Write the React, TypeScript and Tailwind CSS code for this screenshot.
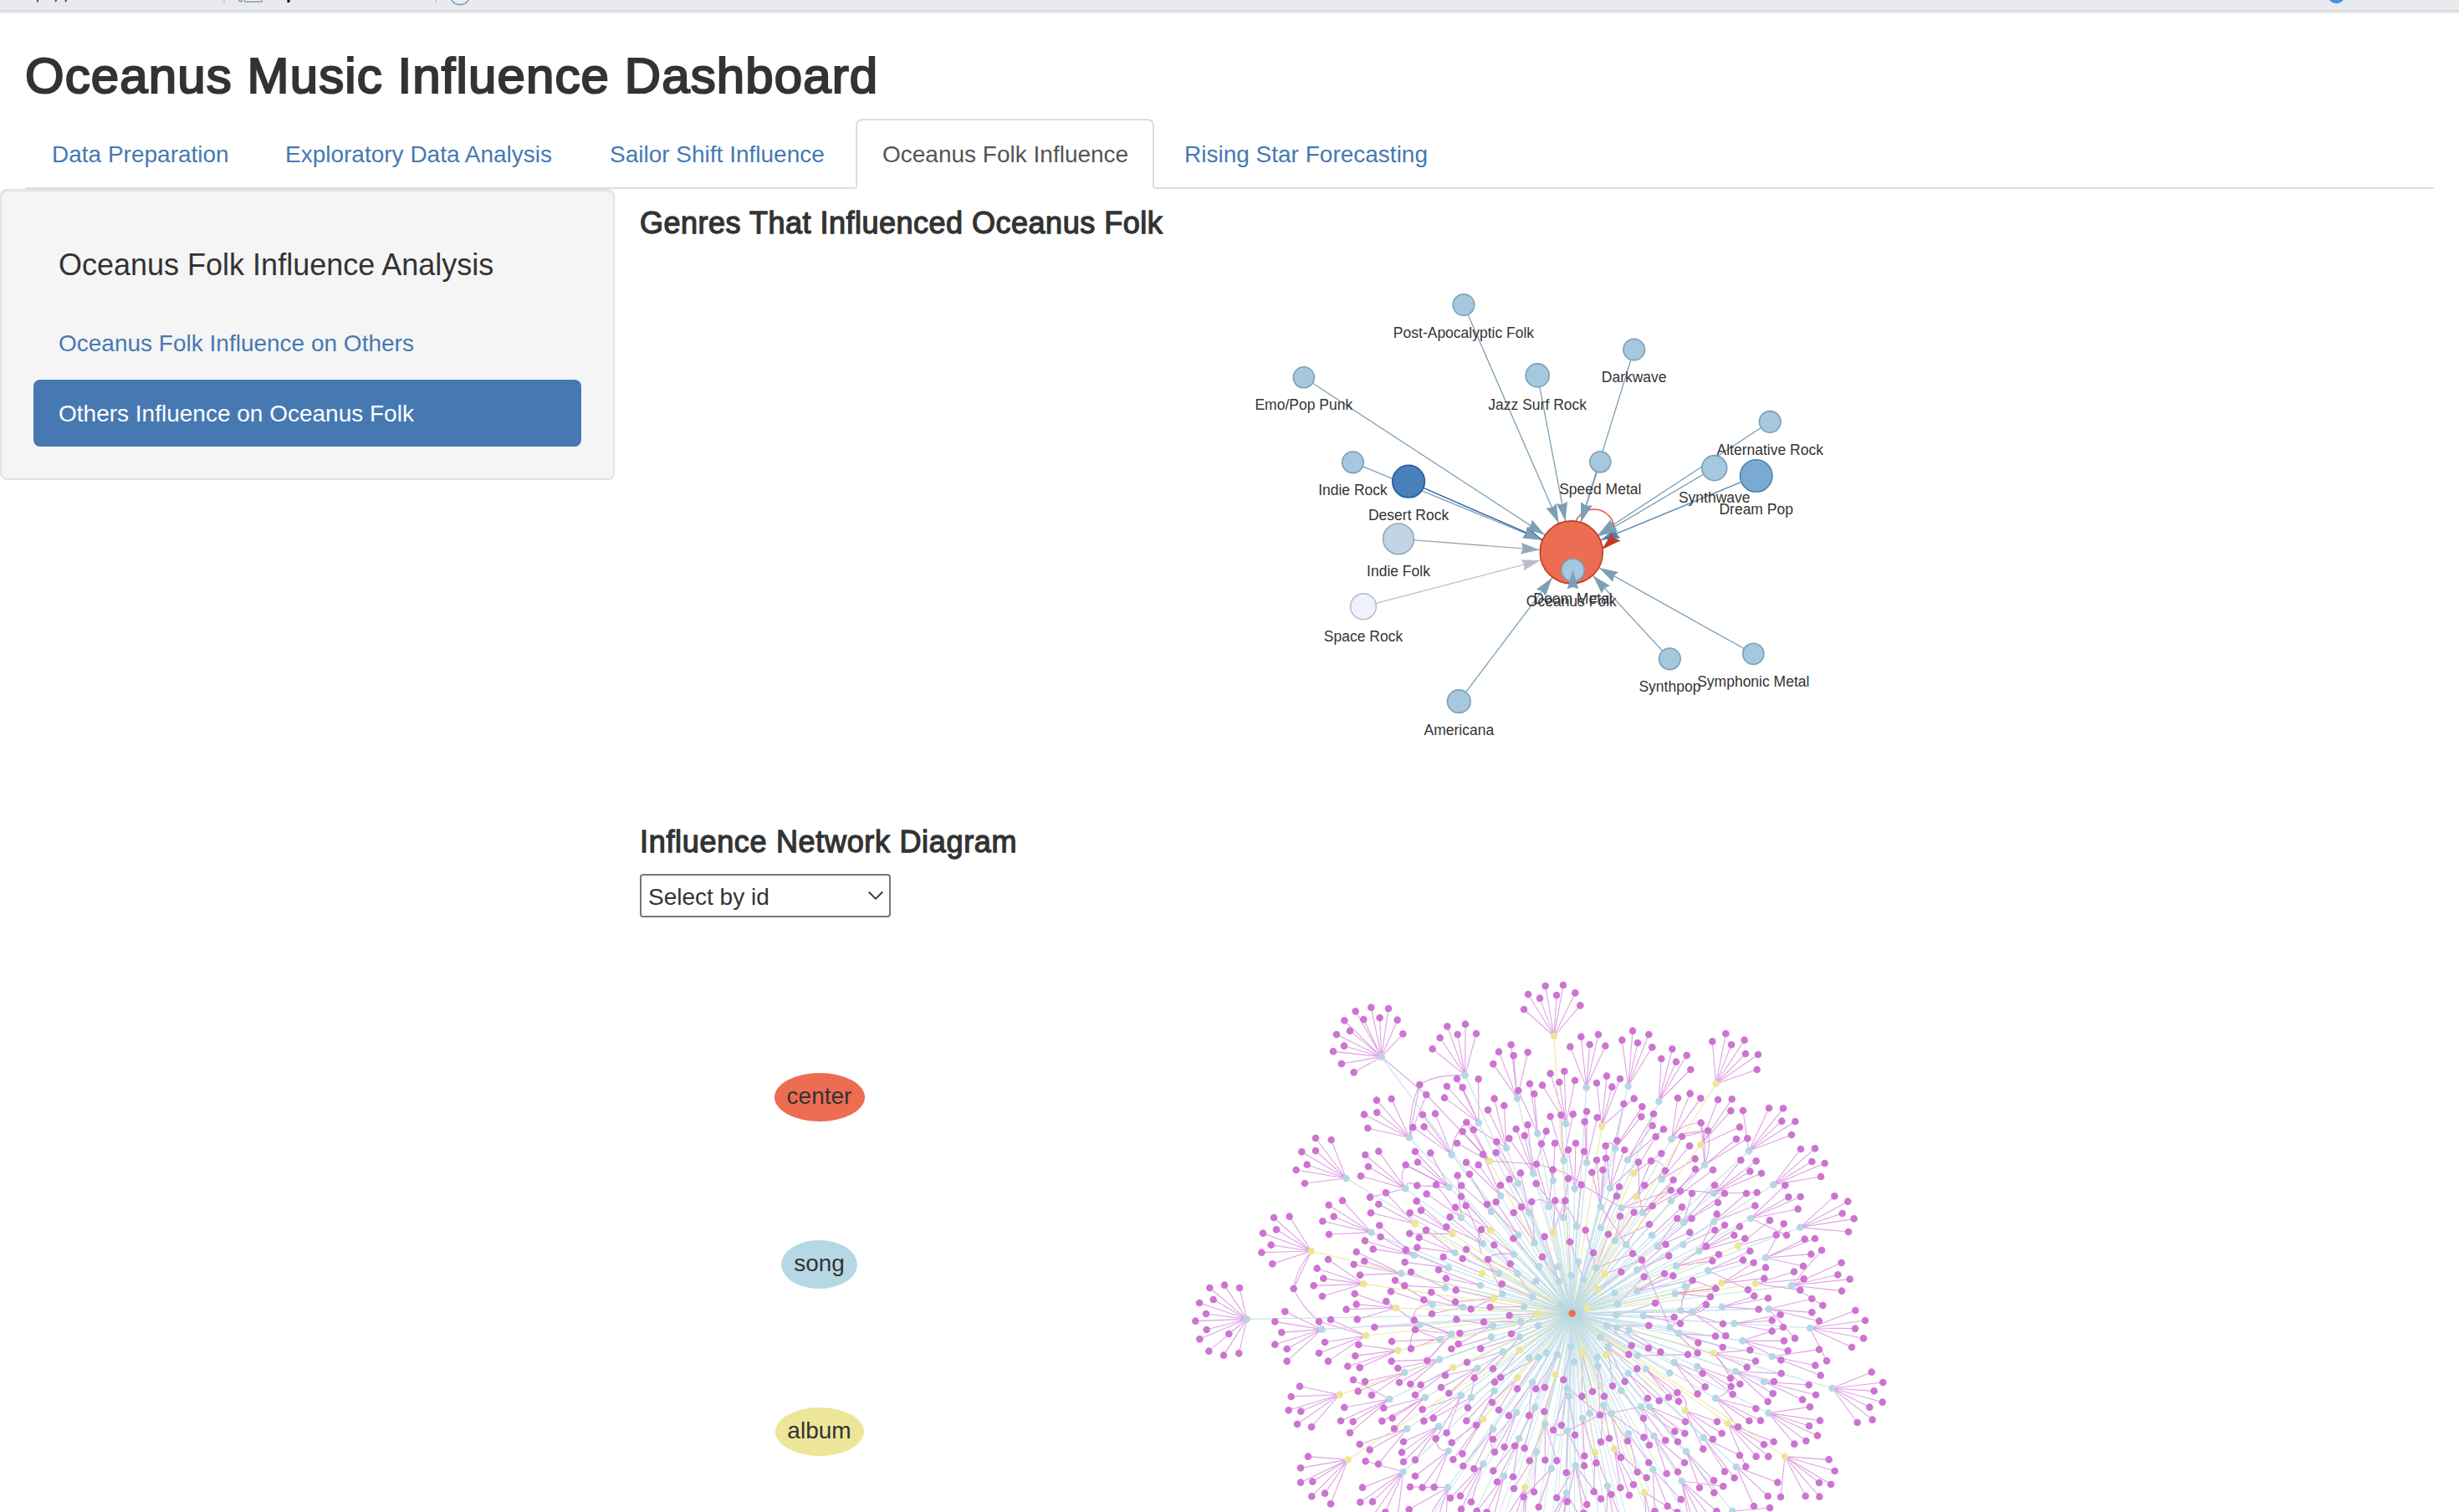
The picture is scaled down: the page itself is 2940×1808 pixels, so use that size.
import React from "react";

type Pt = [number, number];

/* ---------- Genre influence graph ---------- */

interface Genre {
  label: string;
  x: number;
  y: number;
  r: number;
  fill: string;
  stroke: string;
}

const LIGHT = { fill: "#a6c8de", stroke: "#7c9fb5" };

const HUB: Genre = { label: "Oceanus Folk", x: 1878.8, y: 660.4, r: 37.5, fill: "#ed6d52", stroke: "#c03d25" };

const GENRES: Genre[] = [
  { label: "Post-Apocalyptic Folk", x: 1750, y: 364.5, r: 12.8, ...LIGHT },
  { label: "Emo/Pop Punk", x: 1558.8, y: 451.3, r: 12.5, ...LIGHT },
  { label: "Jazz Surf Rock", x: 1838.2, y: 448.9, r: 14, ...LIGHT },
  { label: "Darkwave", x: 1953.7, y: 418, r: 12.8, ...LIGHT },
  { label: "Alternative Rock", x: 2116.2, y: 504.4, r: 12.8, ...LIGHT },
  { label: "Indie Rock", x: 1617.5, y: 552.8, r: 12.8, ...LIGHT },
  { label: "Desert Rock", x: 1684.1, y: 575.7, r: 19.3, fill: "#4980b9", stroke: "#285b9c" },
  { label: "Speed Metal", x: 1913.3, y: 552.3, r: 12.5, ...LIGHT },
  { label: "Synthwave", x: 2049.7, y: 559.6, r: 15, ...LIGHT },
  { label: "Dream Pop", x: 2099.7, y: 569, r: 19.2, fill: "#7aaad1", stroke: "#4c84b2" },
  { label: "Indie Folk", x: 1672, y: 644.4, r: 18.4, fill: "#c3d5e5", stroke: "#93a9b9" },
  { label: "Space Rock", x: 1630, y: 725.3, r: 15.4, fill: "#eff2fd", stroke: "#bcbdca" },
  { label: "Americana", x: 1744.3, y: 838.7, r: 13.8, ...LIGHT },
  { label: "Synthpop", x: 1996.4, y: 787.8, r: 12.8, ...LIGHT },
  { label: "Symphonic Metal", x: 2096.3, y: 781.8, r: 12.6, ...LIGHT },
  { label: "Doom Metal", x: 1880.5, y: 681.8, r: 13.6, ...LIGHT },
];

function arrow(from: Genre): string {
  const inside = from.label === "Doom Metal";
  const a = inside ? -Math.PI / 2 : Math.atan2(HUB.y - from.y, HUB.x - from.x);
  const tx = inside ? from.x : HUB.x - Math.cos(a) * 38;
  const ty = inside ? from.y : HUB.y - Math.sin(a) * 38;
  const len = 22.5;
  const at = (l: number, w: number) =>
    `${tx - Math.cos(a) * l * len - Math.sin(a) * w * len},${ty - Math.sin(a) * l * len + Math.cos(a) * w * len}`;
  return [`${tx},${ty}`, at(1, 0.3), at(0.9, 0), at(1, -0.3)].join(" ");
}

/* Light arrows are painted above the two dark ones */
const ARROWS = [...GENRES].sort((a, b) => Number(a.fill === LIGHT.fill) - Number(b.fill === LIGHT.fill));

function GenreGraph() {
  return (
    <svg className="block h-[690px] w-[2145px]" viewBox="765 287 2145 690">
      {GENRES.slice(0, 15).map((g) => (
        <line key={g.label} x1={g.x} y1={g.y} x2={HUB.x} y2={HUB.y} stroke={g.stroke} strokeWidth={1.3} />
      ))}
      <circle cx={1906} cy={633} r={24} fill="none" stroke="#d6553c" strokeWidth={1.4} />
      {[HUB, ...GENRES].map((g) => (
        <circle key={g.label} cx={g.x} cy={g.y} r={g.r} fill={g.fill} stroke={g.stroke} strokeWidth={1.6} />
      ))}
      {ARROWS.map((g) => (
        <polygon key={g.label} points={arrow(g)} fill={g.stroke} />
      ))}
      <polygon points="1915.5,657 1927.5,636 1929,643 1937.5,646.5" fill="#c03d25" />
      <g fontFamily="'Liberation Sans', Arial, sans-serif" fontSize={17.5} fill="#343434" textAnchor="middle">
        {[HUB, ...GENRES].map((g) => (
          <text key={g.label} x={g.x} y={g.y + g.r + 26.6}>
            {g.label}
          </text>
        ))}
      </g>
    </svg>
  );
}

/* ---------- Song / album network ---------- */

interface Sector {
  ox: number;
  oy: number;
  songs: string;
  albums: string;
  leaves: string;
}

const SECTORS: Sector[] = [
  {
    ox: 1400,
    oy: 1160,
    songs:
      "755,311 1055,377 1242,460 855,601 1007,662 1104,548 1203,638 1315,586 1417,551 628,747 841,784 998,779 1183,810 1245,765 1300,730 1371,755 1409,683 1149,867 1285,870 1356,848 1407,888 1041,888 719,941 1246,950",
    albums: "1374,237 1142,685 875,910 1009,946 1147,934 1371,940",
    leaves:
      "1281,87 1343,57 1323,101 1407,54 1383,90 1266,141 662,148 718,134 780,138 622,181 691,177 749,171 812,179 594,231 642,218 832,229 582,292 621,272 612,336 656,367 991,202 1056,194 1028,231 1095,228 965,243 938,283 1176,293 1220,268 1229,307 1280,295 1156,337 1026,390 1103,391 990,417 1046,421 981,458 892,411 916,447 1246,432 1287,408 1332,413 1303,444 1361,371 1411,363 1393,402 738,467 791,462 693,518 739,511 706,567 903,519 948,515 908,562 868,564 1160,461 1137,502 1195,486 1361,525 1399,520 1060,546 1085,573 1046,579 1026,621 1119,661 1166,655 1168,616 1213,604 1238,570 1280,555 1268,594 1346,578 1329,623 1377,621 1425,645 519,603 575,609 469,652 519,648 488,698 449,717 480,765 697,663 745,650 708,705 681,739 842,699 876,651 931,656 885,689 883,773 917,803 951,770 1059,690 1103,699 1071,732 1028,737 1042,773 1041,812 1058,845 1020,851 1311,696 1254,728 1214,750 1182,772 1166,832 1134,840 1310,766 1370,716 1425,748 1294,831 1257,850 1229,870 1378,827 1414,827 714,815 771,799 745,840 717,871 857,871 881,829 897,862 615,827 566,843 584,884 544,901 567,948 369,888 425,884 378,931 330,944 748,916 752,957 696,971 856,945 915,933 890,960 988,921 1001,886 1113,931 1228,963 1340,956 1431,975",
  },
  {
    ox: 1860,
    oy: 1160,
    songs:
      "110,421 260,416 370,471 415,607 213,640 111,691 68,784 195,782 258,681 380,750 534,699 693,649 414,828 567,801 781,770 699,891 877,923 161,849 236,853 312,870 162,924 75,919 345,951 459,905 567,903 213,970",
    albums: "575,408 165,561 520,627 280,729 288,812",
    leaves:
      "70,82 88,127 52,275 91,239 153,231 122,267 178,272 69,396 147,405 183,380 202,419 231,390 276,218 334,231 238,251 294,261 346,277 418,283 470,306 379,318 432,329 484,357 610,228 562,256 677,251 630,268 681,300 726,303 722,357 438,459 482,443 520,460 582,465 632,463 628,505 672,504 281,461 244,480 310,490 351,516 307,526 111,507 62,517 149,529 104,544 347,558 387,571 359,598 220,612 179,631 247,645 72,621 102,651 453,597 521,548 546,576 480,631 660,563 648,606 688,604 765,495 816,496 811,542 859,543 846,591 879,642 930,640 919,687 965,693 951,741 147,682 180,675 169,717 130,726 297,689 342,685 379,658 393,720 319,772 422,753 228,777 219,811 92,770 500,677 501,714 564,717 413,790 447,793 489,801 570,772 606,801 664,682 719,685 697,722 738,729 823,772 835,814 878,813 869,857 684,801 722,798 715,845 582,834 453,850 347,846 281,869 231,883 578,875 488,891 436,891 336,912 189,948 107,933 1000,811 1048,830 1028,873 1070,892 1050,939 768,898 818,910 791,950 828,951 660,920 606,915 571,933 640,951 679,963 481,941 893,965 930,963",
  },
  {
    ox: 1400,
    oy: 1480,
    songs:
      "1119,21 1304,19 872,63 1019,54 995,108 1230,60 1320,104 1388,104 1436,136 1392,156 1309,156 1243,128 1176,128 826,128 1110,171 984,180 1189,202 1297,213 1396,239 1409,268 938,240 1048,249 1266,248 272,292 542,329 893,313 1155,315 1254,301 1317,315 1006,345 966,365 1149,356 1251,356 1346,413 1190,409 963,437 1385,420 1318,429 1285,431 1435,391 1099,468 838,484 1296,518 1160,550 784,579 912,573 1041,566 1077,573 1421,540 1428,569 1306,608 1240,627 1342,668 847,685 960,677 1155,687 1421,693 1249,720 995,765 1311,768 833,840 1120,811 1195,855 1365,828 1419,916 993,896",
    albums:
      "503,48 691,166 1116,128 1156,218 807,252 1315,272 699,351 815,404 1011,466 1251,403 1243,502 1380,491 605,563 1119,651 635,796 1270,896",
    leaves:
      "359,26 325,53 364,94 440,183 564,78 524,110 547,146 512,172 543,210 665,51 725,41 656,96 694,84 678,134 842,44 883,35 839,88 861,123 804,153 838,172 977,69 1046,75 1059,42 960,115 987,146 1137,78 1217,94 1159,26 1332,69 1187,166 139,180 192,170 246,180 102,234 152,222 126,273 88,299 128,330 208,345 103,364 136,407 189,422 244,415 409,265 373,301 397,340 373,383 416,399 416,443 531,301 573,294 659,201 665,239 629,257 668,293 730,321 552,375 531,414 564,443 789,193 772,228 934,196 907,223 1022,188 1020,230 1076,256 1145,249 936,273 872,296 876,330 1024,293 1122,302 1214,279 1036,343 1221,345 1031,381 1006,399 1111,398 792,372 673,384 661,424 634,461 677,466 791,443 814,468 861,398 919,441 1062,447 1155,470 984,494 1088,503 1183,501 1161,518 654,510 696,516 671,551 720,565 819,519 859,525 896,528 876,564 969,537 997,558 1242,542 1309,542 1341,537 1408,510 462,533 431,570 422,619 466,623 453,669 504,679 622,609 609,657 653,660 642,700 763,611 757,658 794,647 801,685 902,616 907,658 941,647 989,700 950,721 1007,735 1065,610 1060,657 1152,591 1176,618 1212,638 1095,673 1284,638 1339,624 1371,690 1401,673 677,741 713,761 698,802 744,812 834,732 828,770 834,804 876,797 1155,723 1161,769 1196,751 1233,747 1268,755 1012,796 1045,775 1048,819 1087,829 1156,836 1227,858 1286,800 1342,798 1384,800 1418,843 492,785 465,826 465,878 508,875 505,928 552,917 573,955 687,896 679,949 723,947 769,985 876,855 858,894 902,896 944,895 854,975 1002,934 1038,926 1077,948 1041,974 1097,981 1133,985 1170,876 1230,900 1265,930 1302,912 1319,966 1384,933 1421,947 720,1005 810,1030 900,1040 940,1060 985,1050 1150,1030 1180,1040 1215,1060 1260,1060 1275,1050 1340,1040 1360,1050 1400,1050",
  },
  {
    ox: 1860,
    oy: 1480,
    songs:
      "253,25 366,31 457,25 514,48 753,72 145,109 432,102 546,118 292,115 81,87 99,149 464,175 428,200 211,198 292,191 846,171 222,238 597,248 764,256 449,261 489,267 217,278 315,280 640,308 912,324 183,316 219,323 263,331 409,321 442,343 160,357 670,370 188,391 776,426 149,429 294,423 67,446 151,461 425,447 508,462 260,486 323,471 409,485 645,480 747,517 992,540 235,549 573,576 172,601 306,607 336,606 122,630 199,631 96,648 763,629 261,703 352,711 530,717 468,767 71,818 349,831 648,822 452,873 186,891 634,981 86,272 78,285",
    albums:
      "655,29 177,130 153,186 596,163 717,165 113,252 566,414 181,419 96,415 465,620 617,666 822,785 141,771 210,758 318,914",
    leaves:
      "135,54 235,123 276,57 309,80 395,24 406,65 540,31 585,60 562,83 697,48 672,80 710,90 916,59 954,45 753,107 390,129 421,137 317,140 491,153 574,182 555,212 540,240 748,146 855,122 888,102 890,148 877,188 690,187 712,209 762,217 728,257 1025,90 1012,133 1055,149 1026,191 919,219 958,243 919,268 945,299 806,276 776,297 816,321 776,335 1075,261 1110,297 1074,326 1104,361 1062,393 357,235 425,285 447,308 334,315 600,309 573,353 610,352 511,377 599,393 697,403 717,443 686,465 819,370 858,361 833,406 808,439 945,401 972,442 931,458 950,494 272,387 333,396 376,410 262,419 292,470 474,419 509,414 527,487 536,535 509,560 627,504 629,534 661,525 635,562 809,487 783,516 779,559 761,588 908,528 933,564 885,581 912,607 718,613 694,657 735,656 1133,482 1174,519 1142,550 1172,590 1126,608 1136,653 1082,663 248,516 204,532 132,552 174,569 94,569 330,576 371,585 405,573 436,556 441,587 159,636 315,648 465,660 427,695 463,702 316,716 336,744 394,727 438,732 579,660 596,702 564,723 529,758 654,679 948,656 909,675 939,710 898,729 856,740 782,732 747,742 763,785 719,785 660,781 682,821 606,839 641,862 567,871 601,892 568,915 516,897 69,708 162,733 192,720 258,729 234,788 103,783 145,808 102,818 293,841 326,861 334,807 398,846 438,840 462,807 279,886 264,924 232,897 137,911 199,921 162,937 112,957 401,963 449,939 355,981 100,988 980,796 1001,837 945,879 987,885 896,927 946,929 796,878 761,927 807,930 711,963 768,969 577,981 436,985 25,1050 120,1060 180,1060 220,1070 250,1050 330,1060 352,1050 480,1030 500,1050 540,1050 600,1060",
  },
];

/* Hubs below the visible part of the canvas */
const HIDDEN_HUBS: Pt[] = [
  [1700, 1830], [1724, 1850], [1748, 1840], [1770, 1870], [1786, 1850], [1800, 1880], [1812, 1850], [1826, 1880],
  [1838, 1860], [1850, 1880], [1858, 1850], [1868, 1880], [1876, 1850], [1884, 1890], [1892, 1850], [1904, 1880],
  [1916, 1850], [1930, 1870], [1946, 1850], [1962, 1880], [1984, 1850], [2006, 1860], [2030, 1840],
];

/* Curved links of artists tied to more than one work: from, control, to */
const CURVES: string[] = [
  "M1697.3 1297Q1715 1285 1751.7 1285.7",
  "M1697.3 1297Q1686 1320 1685 1360.3",
  "M1705.3 1309L1651.7 1263.7",
  "M1705.3 1309L1780.7 1388.3",
  "M1680.7 1393Q1672 1408 1680.3 1421.3",
  "M1680.7 1393L1732.7 1419.7",
  "M1753.3 1342Q1736 1358 1735.7 1380.7",
  "M1753.3 1342L1801 1372.7",
  "M1780.7 1388.3L1837 1392Q1880 1402 1890.7 1416.7L1938.7 1444.3",
  "M1694.3 1417.7Q1681 1410 1680.3 1421.3",
  "M1567.7 1496Q1549 1520 1546.7 1541",
  "M1546.7 1541Q1556 1562 1577 1580.3L1580.7 1589.7",
  "M1963 1506.7L1996.3 1587",
  "M1915 1444L1944 1488L1963 1506.7",
  "M1931 1373.3Q1926 1362 1919.7 1370.3",
  "M2033.7 1342.7Q2008 1343 1998.3 1362.3",
  "M2042 1352Q2010 1354 1998.3 1362.3",
  "M2042 1352Q2046 1374 2038 1393",
  "M2033.7 1342.7Q2040 1366 2038 1393",
  "M1938.7 1444.3L1996 1424Q2020 1422 2049 1427",
  "M1938.7 1444.3L1975.7 1442",
  "M1959 1389.7L1960 1430L1964 1450",
  "M1992 1400Q1986 1386 1974 1388",
  "M2004 1424L2038 1393",
  "M2010 1557L2023.7 1531L2051 1540.7L2045 1550.7L2023 1569",
  "M2009.7 1567Q2035 1575 2040 1560",
  "M2023.7 1531Q2012 1540 2009.7 1567",
  "M2002.7 1546.7L2051.3 1540.7",
  "M1690.7 1578.7Q1688 1560 1712.7 1560",
  "M1692 1590L1722 1601.7",
  "M1697.7 1584.3Q1684 1595 1687 1612.7",
  "M1690.7 1578.7L1735.3 1595",
  "M1706.3 1627L1735.3 1595",
  "M1778.7 1506Q1786 1496 1810 1500",
  "M1778.7 1506Q1788 1530 1796.3 1547.3",
  "M1772 1500Q1764 1480 1771 1470.3",
  "M1716.7 1720.3Q1718 1736 1731.7 1735",
  "M1913 1692L1962 1682.3",
  "M1873.7 1711L1913 1692L1874.7 1660",
  "M1857 1710Q1864 1722 1873.7 1711",
  "M2048.7 1618Q2060 1630 2069 1648Q2074 1664 2051 1672",
  "M2005.3 1665.3Q2020 1672 2015 1686.7",
  "M1859.3 1435.7Q1876 1438 1885 1466.3",
  "M1871.3 1435.7L1869 1456",
  "M1831.3 1437Q1846 1430 1852 1442.7",
  "M1783 1703Q1778 1724 1787 1736",
];

const CENTER: Pt = [1879.7, 1570.5];

const parse = (s: Sector, list: string): Pt[] =>
  list.split(" ").map((p) => {
    const [a, b] = p.split(",").map(Number);
    return [s.ox + a / 3, s.oy + b / 3];
  });

const SONGS = SECTORS.flatMap((s) => parse(s, s.songs));
const ALBUMS = SECTORS.flatMap((s) => parse(s, s.albums));
const LEAVES = SECTORS.flatMap((s) => parse(s, s.leaves));
const WORKS = [...SONGS, ...ALBUMS];

/* Each artist hangs off the work that sits about one spring length inward */
function parentOf([x, y]: Pt): Pt {
  let best = WORKS[0];
  let bestCost = Infinity;
  for (const w of WORKS) {
    const dx = x - w[0];
    const dy = y - w[1];
    const rx = w[0] - CENTER[0];
    const ry = w[1] - CENTER[1];
    const d = Math.hypot(dx, dy);
    const rr = Math.hypot(rx, ry);
    const cos = (dx * rx + dy * ry) / (d * rr || 1);
    const cost = Math.abs(d - 48) * 1.3 + 35 * (1 - cos);
    if (cost < bestCost) {
      bestCost = cost;
      best = w;
    }
  }
  return best;
}

const rays = (pts: Pt[]) => pts.map(([x, y]) => `M${CENTER[0]} ${CENTER[1]}L${x} ${y}`).join("");
const LEAF_PATH = LEAVES.map((l) => {
  const p = parentOf(l);
  return `M${p[0]} ${p[1]}L${l[0]} ${l[1]}`;
}).join("");

function WorkNetwork() {
  return (
    <svg className="block h-[712px] w-[1700px] shrink-0" viewBox="1210 1097 1700 712">
      <g fill="none" strokeWidth={1.1}>
        <path d={LEAF_PATH} stroke="#cc74d2" strokeOpacity={0.66} />
        <path d={CURVES.join("")} stroke="#cc74d2" strokeOpacity={0.66} />
        <path d={rays(ALBUMS)} stroke="#ede698" strokeOpacity={0.9} />
        <path d={rays([...SONGS, ...HIDDEN_HUBS])} stroke="#b6d8e4" strokeOpacity={0.6} />
        {/* The works are linked individually so overlapping rays build up near the centre */}
        {SONGS.map(([x, y], i) => (
          <line key={i} x1={CENTER[0]} y1={CENTER[1]} x2={x} y2={y} stroke="#b6d8e4" strokeOpacity={0.3} />
        ))}
      </g>
      <g fill="#cc74d2">
        {LEAVES.map(([x, y], i) => (
          <circle key={i} cx={x} cy={y} r={4.3} />
        ))}
      </g>
      <g fill="#b6d8e4">
        {SONGS.map(([x, y], i) => (
          <circle key={i} cx={x} cy={y} r={4.3} />
        ))}
      </g>
      <g fill="#ede698">
        {ALBUMS.map(([x, y], i) => (
          <circle key={i} cx={x} cy={y} r={4.3} />
        ))}
      </g>
      <circle cx={CENTER[0]} cy={CENTER[1]} r={4.3} fill="#ed6d52" />
    </svg>
  );
}

/* ---------- Page ---------- */

const TABS = [
  { label: "Data Preparation", width: "w-[275px]" },
  { label: "Exploratory Data Analysis", width: "w-[384px]" },
  { label: "Sailor Shift Influence", width: "w-[322px]" },
  { label: "Oceanus Folk Influence", width: "w-[357px]", active: true },
  { label: "Rising Star Forecasting", width: "w-[356px]" },
];

function BookmarkBar() {
  return (
    <div className="h-4 border-b-2 border-[#e9eaee] bg-[#e9eaee]">
      <svg className="block h-[14px] w-[2940px] border-b-2 border-[#d6d8dc]" viewBox="0 0 2940 12">
        <g stroke="#444" strokeWidth={1.8} fill="none">
          <path d="M45 0V2.5M67.5 0L66 2M79.5 0L78 2" />
          <path d="M345 0V3" stroke="#111" strokeWidth={3} />
        </g>
        <path d="M268 0V3.5M521 0V3.5" stroke="#c3c5ca" strokeWidth={1.5} />
        <path d="M285 0L288 2L290 0" stroke="#8a97a8" strokeWidth={1.4} fill="none" />
        <path d="M292.5 0V2H313V0" stroke="#8797ab" strokeWidth={1.3} fill="#fafafa" />
        <circle cx={550} cy={-6.5} r={12} fill="#e3effc" stroke="#8494a8" strokeWidth={1.4} />
        <circle cx={2793.3} cy={-6} r={10.2} fill="#4194e4" />
      </svg>
    </div>
  );
}

function Legend() {
  return (
    <div className="flex w-[429px] shrink-0 flex-col items-center gap-[142px] pt-[186px] text-[28px] leading-[55px] text-[#333]">
      <div className="h-[58px] w-[108px] rounded-[50%] bg-[#ed6d52] text-center">center</div>
      <div className="h-[58px] w-[91px] rounded-[50%] bg-[#b6d8e4] text-center">song</div>
      <div className="h-[58px] w-[106px] rounded-[50%] bg-[#ede698] text-center">album</div>
    </div>
  );
}

export default function App() {
  return (
    <div className="h-[1808px] w-[2940px] overflow-hidden bg-white font-['Liberation_Sans',Arial,sans-serif] text-[28px] leading-[40px] text-[#333]">
      <BookmarkBar />
      <header className="px-[30px] pt-[42px]">
        <h1 className="h-[84px] text-[60px] leading-[66px] tracking-[1.1px] [-webkit-text-stroke:2.2px_#333]">
          Oceanus Music Influence Dashboard
        </h1>
        <nav className="flex gap-1 border-b-2 border-[#ddd]">
          {TABS.map((t) => (
            <a
              key={t.label}
              className={`${t.width} -mb-[2px] h-[84px] shrink-0 rounded-t-lg border-2 pt-[21px] pl-[30px] whitespace-nowrap ${
                t.active ? "border-[#ddd] border-b-white bg-white text-[#555]" : "border-transparent text-[#4679b2]"
              }`}
            >
              {t.label}
            </a>
          ))}
        </nav>
      </header>
      <div className="flex">
        <aside className="h-[348px] w-[735px] shrink-0 rounded-lg border-2 border-[#e3e3e3] bg-[#f5f5f5] px-[38px] pt-[69px] shadow-[inset_0_2px_2px_rgba(0,0,0,0.05)]">
          <h4 className="mb-[33px] pl-[30px] text-[36px] leading-[40px]">Oceanus Folk Influence Analysis</h4>
          <ul className="flex flex-col gap-1">
            <li className="h-20 px-[30px] pt-[21px] text-[#4679b2]">Oceanus Folk Influence on Others</li>
            <li className="h-20 rounded-lg bg-[#4679b2] px-[30px] pt-[21px] text-white">Others Influence on Oceanus Folk</li>
          </ul>
        </aside>
        <main className="w-[2175px] pt-[21px] pl-[30px]">
          <h4 className="text-[36px] leading-[40px] tracking-[0.5px] [-webkit-text-stroke:1.3px_#333]">
            Genres That Influenced Oceanus Folk
          </h4>
          <GenreGraph />
          <h4 className="mt-[10px] text-[36px] leading-[40px] tracking-[0.68px] [-webkit-text-stroke:1.3px_#333]">
            Influence Network Diagram
          </h4>
          <div className="mt-[18px] flex h-[52px] w-[300px] items-center justify-between rounded-[4px] border-2 border-[#767676] pr-1.5 pl-2">
            <span className="pt-[3px]">Select by id</span>
            <svg className="h-[12px] w-[20px]" viewBox="0 0 20 12" fill="none" stroke="#333" strokeWidth={1.8}>
              <path d="M1.8 1.5L10 9.8L18.2 1.5" />
            </svg>
          </div>
          <div className="flex">
            <Legend />
            <div className="w-4 shrink-0" />
            <WorkNetwork />
          </div>
        </main>
      </div>
    </div>
  );
}
